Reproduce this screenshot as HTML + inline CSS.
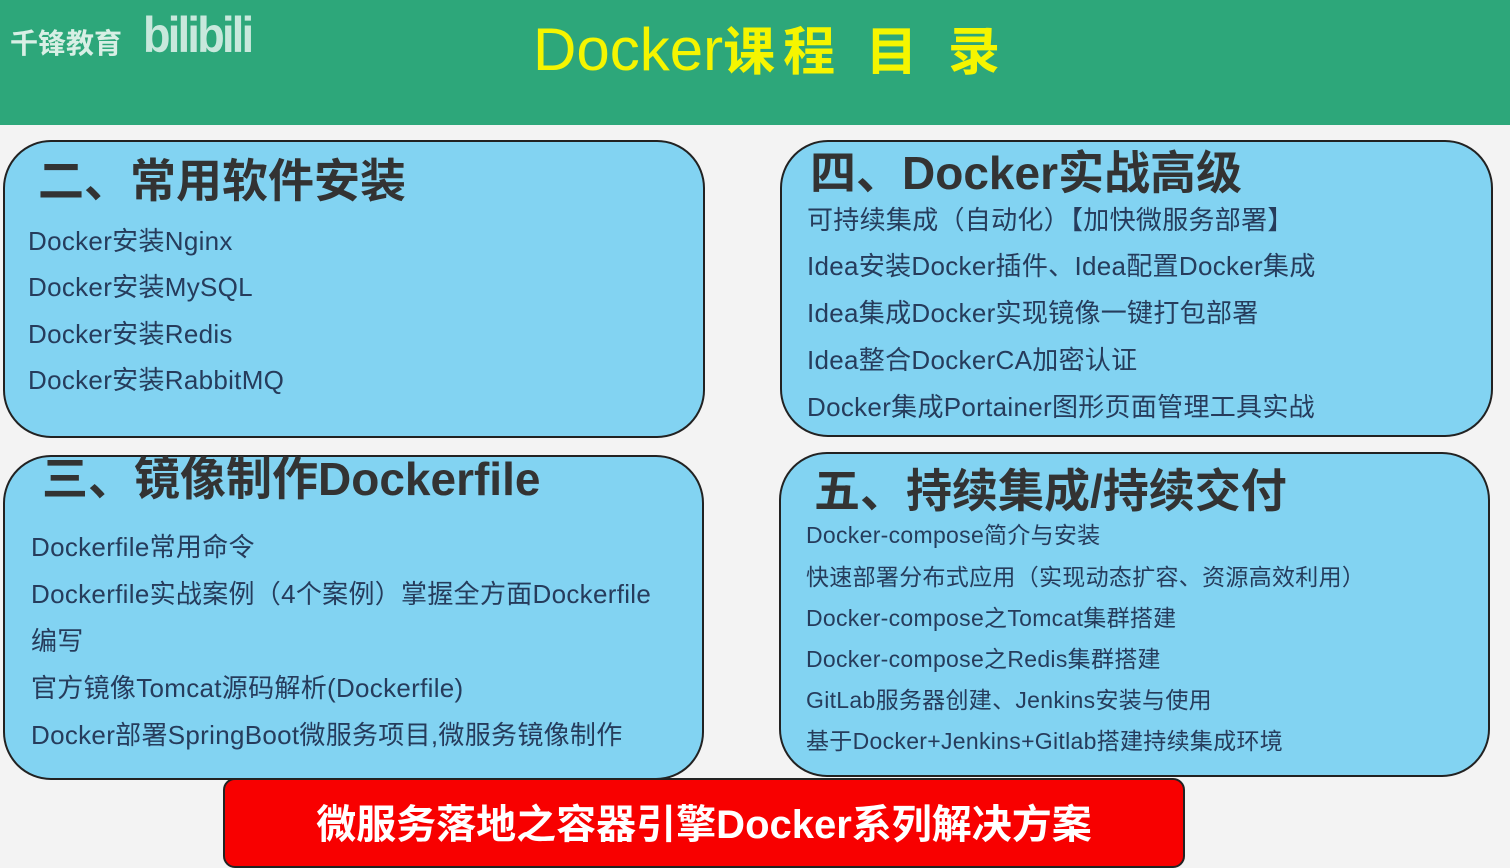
<!DOCTYPE html><html><head><meta charset="utf-8"><style>
body{margin:0;width:1510px;height:858px;background:#f3f3f3;position:relative;overflow:hidden;font-family:"Liberation Sans","Noto Sans CJK SC",sans-serif}
.hd{position:absolute;left:0;top:0;width:1510px;height:125px;background:#2da77a}
.box{position:absolute;background:#82d3f2;border:2px solid #222;border-radius:48px;box-sizing:border-box}
.t{position:absolute;white-space:nowrap;transform-origin:left top}
.ti{font-weight:bold;color:#333;font-size:46px}
.it{color:#263c5c;font-size:26px;letter-spacing:0.3px}
.it2{color:#263c5c;font-size:23px;letter-spacing:0.3px}
</style></head><body>
<div class="hd"></div>
<div class="t" style="left:10px;top:22px;font-size:28px;color:#d8efe5;font-weight:bold">千锋教育</div>
<div class="t" style="left:143px;top:6px;font-size:50px;color:#c8e8dc;font-weight:bold;letter-spacing:-3px;transform:scaleX(0.9)">bilibili</div>
<div class="t" style="left:533px;top:10px;font-size:60px;color:#f5f500">Docker<b style="font-size:52px;letter-spacing:8px">课程 目 录</b></div>

<div class="box" style="left:3px;top:140px;width:702px;height:298px"></div>
<div class="box" style="left:780px;top:140px;width:713px;height:297px"></div>
<div class="box" style="left:3px;top:455px;width:701px;height:325px"></div>
<div class="box" style="left:779px;top:452px;width:711px;height:325px"></div>

<div class="t ti" style="left:38px;top:145px">二、常用软件安装</div>
<div class="t it" style="left:28px;top:221px">Docker安装Nginx</div>
<div class="t it" style="left:28px;top:267px">Docker安装MySQL</div>
<div class="t it" style="left:28px;top:314px">Docker安装Redis</div>
<div class="t it" style="left:28px;top:360px">Docker安装RabbitMQ</div>

<div class="t ti" style="left:810px;top:137px">四、Docker实战高级</div>
<div class="t it" style="left:807px;top:200px">可持续集成（自动化）【加快微服务部署】</div>
<div class="t it" style="left:807px;top:246px">Idea安装Docker插件、Idea配置Docker集成</div>
<div class="t it" style="left:807px;top:293px">Idea集成Docker实现镜像一键打包部署</div>
<div class="t it" style="left:807px;top:340px">Idea整合DockerCA加密认证</div>
<div class="t it" style="left:807px;top:387px">Docker集成Portainer图形页面管理工具实战</div>

<div class="t ti" style="left:42px;top:443px">三、镜像制作Dockerfile</div>
<div class="t it" style="left:31px;top:527px">Dockerfile常用命令</div>
<div class="t it" style="left:31px;top:574px">Dockerfile实战案例（4个案例）掌握全方面Dockerfile</div>
<div class="t it" style="left:31px;top:621px">编写</div>
<div class="t it" style="left:31px;top:668px">官方镜像Tomcat源码解析(Dockerfile)</div>
<div class="t it" style="left:31px;top:715px">Docker部署SpringBoot微服务项目,微服务镜像制作</div>

<div class="t ti" style="left:814px;top:455px">五、持续集成/持续交付</div>
<div class="t it2" style="left:806px;top:516px">Docker-compose简介与安装</div>
<div class="t it2" style="left:806px;top:558px">快速部署分布式应用（实现动态扩容、资源高效利用）</div>
<div class="t it2" style="left:806px;top:599px">Docker-compose之Tomcat集群搭建</div>
<div class="t it2" style="left:806px;top:640px">Docker-compose之Redis集群搭建</div>
<div class="t it2" style="left:806px;top:681px">GitLab服务器创建、Jenkins安装与使用</div>
<div class="t it2" style="left:806px;top:722px">基于Docker+Jenkins+Gitlab搭建持续集成环境</div>

<div style="position:absolute;left:223px;top:778px;width:962px;height:90px;background:#f80000;border:2px solid #222;border-radius:12px;box-sizing:border-box"></div>
<div class="t" style="left:223px;top:792px;width:962px;text-align:center;color:#fff;font-weight:bold;font-size:40px">微服务落地之容器引擎Docker系列解决方案</div>
</body></html>
